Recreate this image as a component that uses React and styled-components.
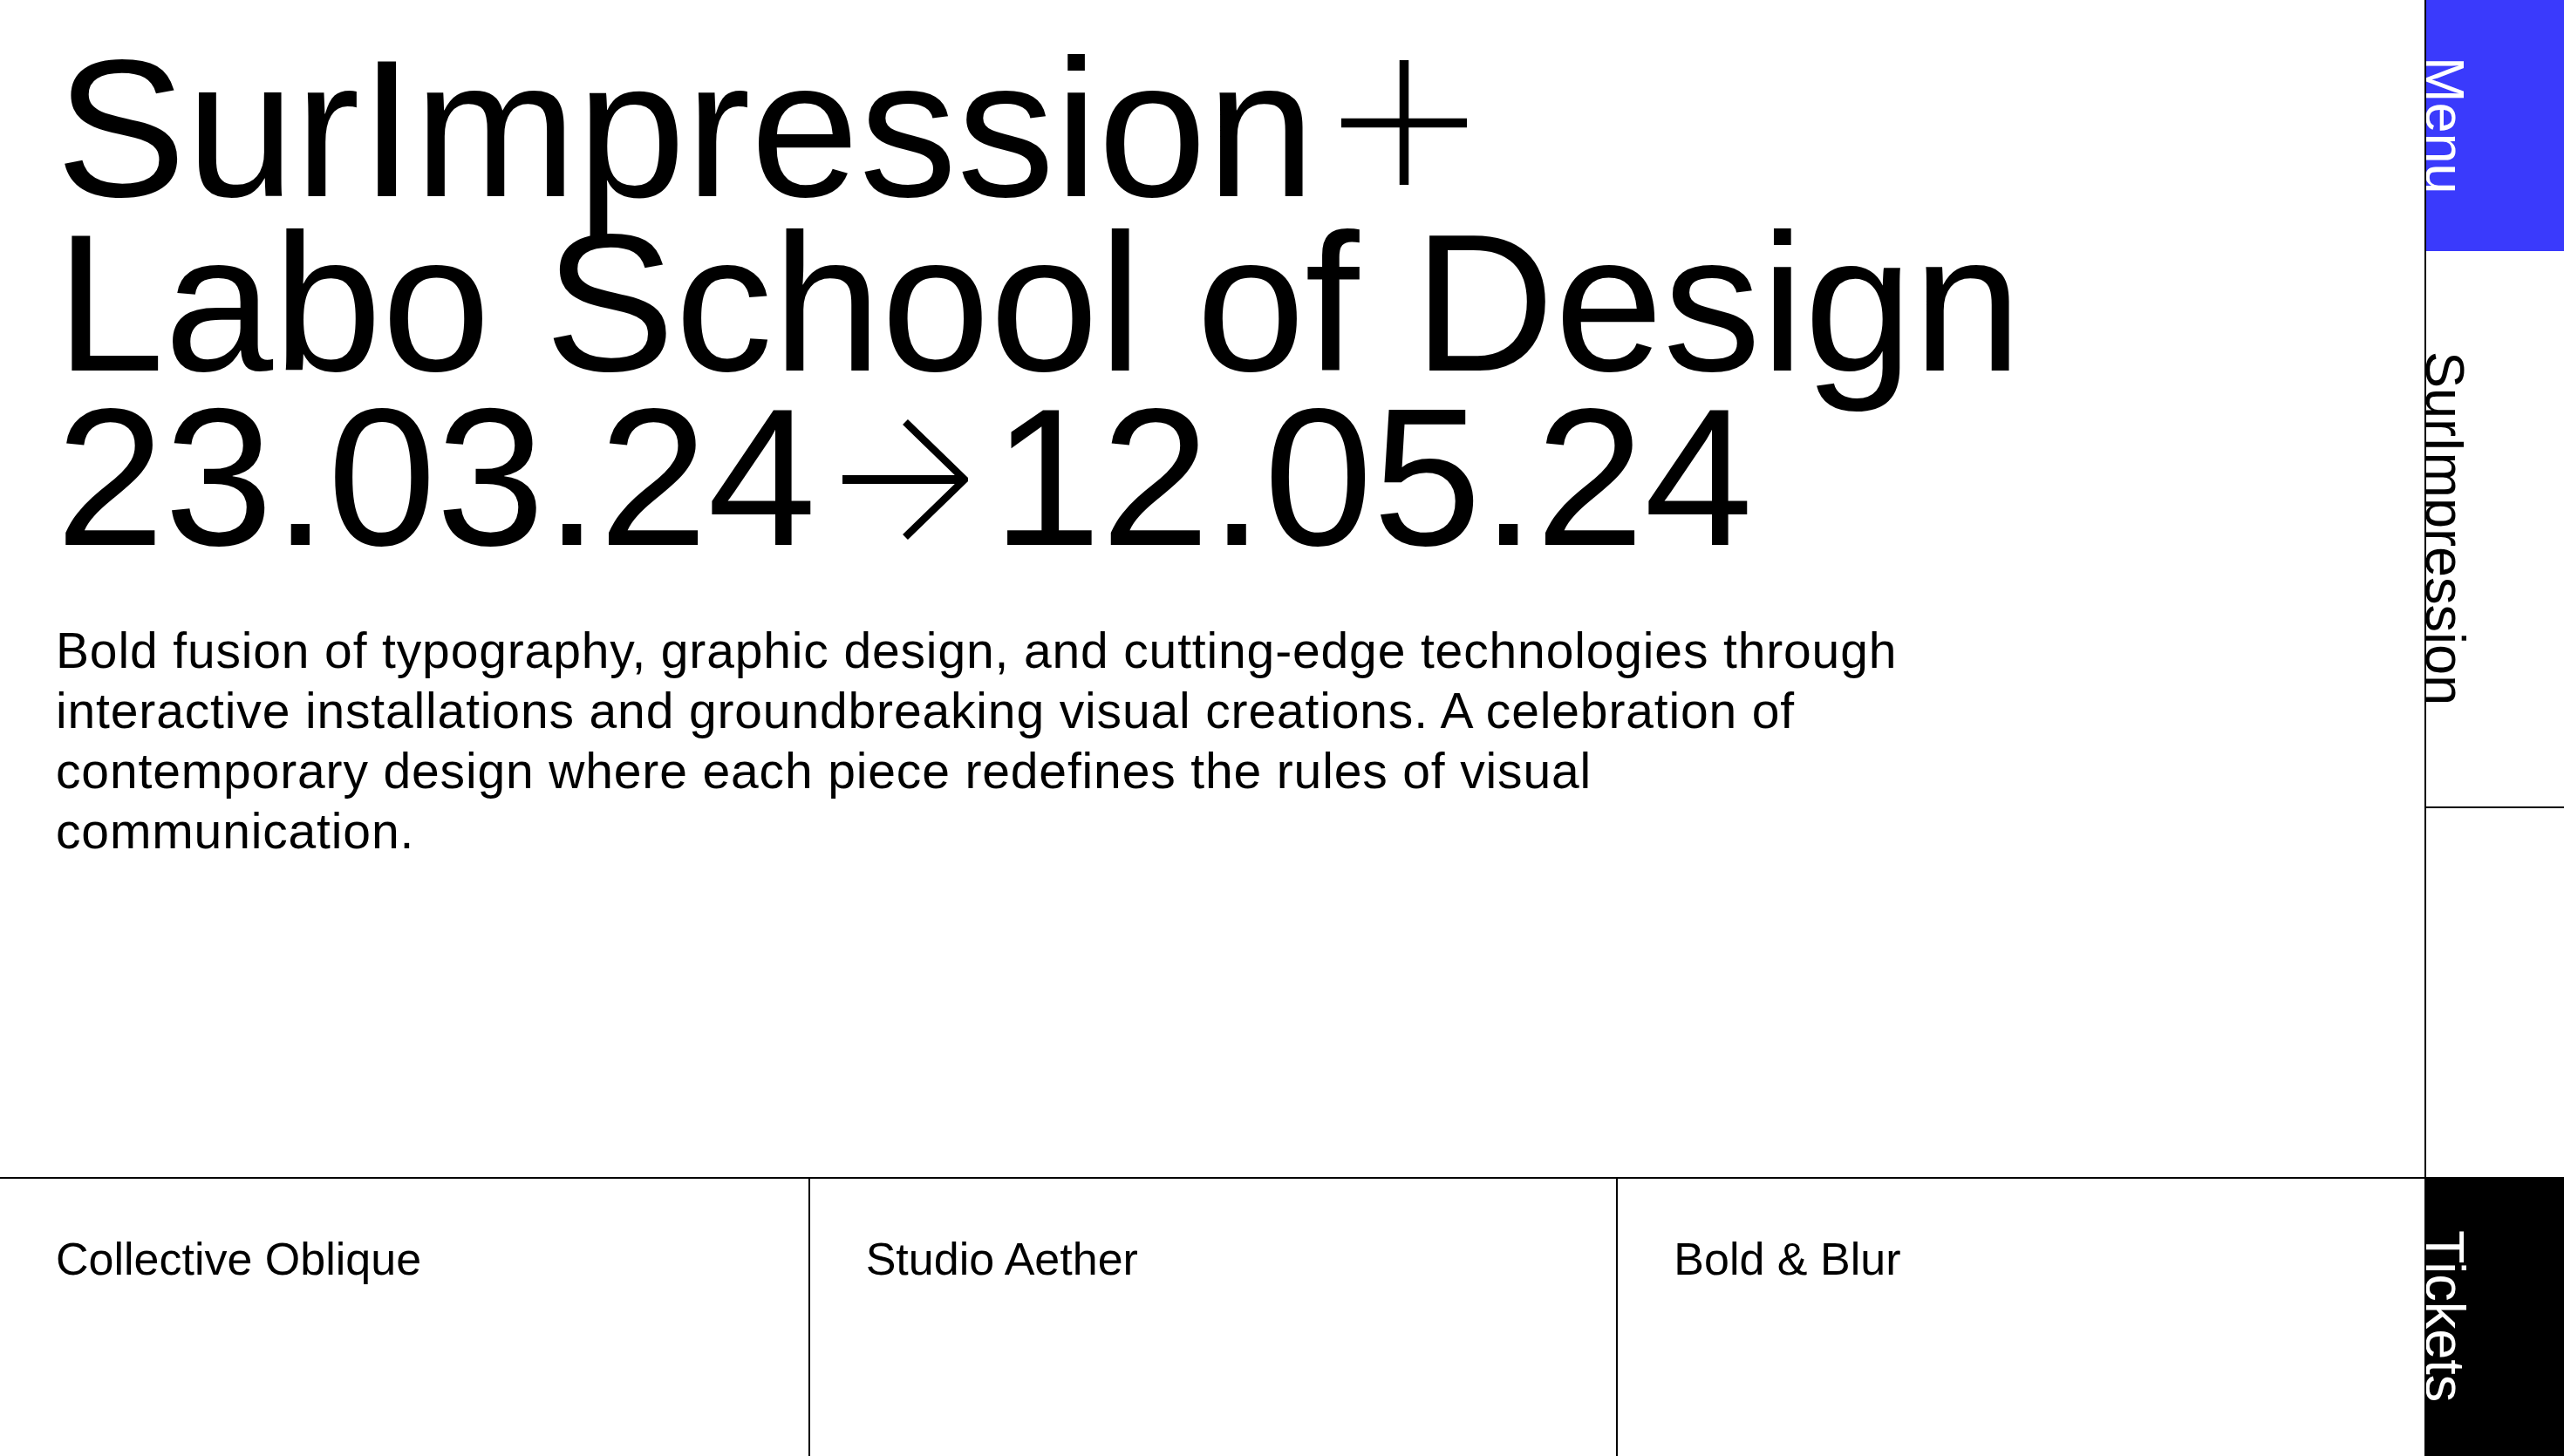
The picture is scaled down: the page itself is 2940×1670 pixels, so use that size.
import React from "react";
import styled, { createGlobalStyle } from "styled-components";

const GlobalStyle = createGlobalStyle`
  html, body, #root {
    margin: 0;
    padding: 0;
    height: 100%;
  }
  body {
    background: #fff;
    color: #000;
    font-family: "Liberation Sans", Arial, Helvetica, sans-serif;
  }
`;

const Page = styled.div`
  display: flex;
  height: 100vh;
  overflow: hidden;
`;

const Main = styled.main`
  flex: 1;
  min-width: 0;
  display: flex;
  flex-direction: column;
`;

const Hero = styled.section`
  flex: 1;
  padding: 47px 64px 0 64px;
`;

const Title = styled.h1`
  margin: 0;
  font-size: 224px;
  line-height: 200px;
  font-weight: 400;
`;

const TitleLine = styled.span`
  display: block;
  white-space: nowrap;
`;

const Glyph = styled.svg`
  display: inline-block;
  vertical-align: ${(p) => p.$lift}px;
  margin: 0 ${(p) => p.$right}px 0 ${(p) => p.$left}px;
`;

const Intro = styled.p`
  margin: 65px 0 0 0;
  width: 2160px;
  font-size: 57px;
  line-height: 69px;
  letter-spacing: 0.015em;
`;

const Partners = styled.div`
  height: 320px;
  box-sizing: border-box;
  border-top: 2px solid #000;
  display: grid;
  grid-template-columns: repeat(3, 1fr);
`;

const Partner = styled.div`
  padding: 62px 64px;
  font-size: 52px;
  line-height: 60px;
  & + & {
    border-left: 2px solid #000;
  }
`;

const Sidebar = styled.nav`
  width: 160px;
  box-sizing: border-box;
  border-left: 2px solid #000;
  display: flex;
  flex-direction: column;
`;

const SideBlock = styled.div`
  flex: ${(p) => (p.$h ? `0 0 ${p.$h}px` : "1")};
  box-sizing: border-box;
  background: ${(p) => p.$bg || "transparent"};
  color: ${(p) => p.$fg || "#000"};
  border-bottom: ${(p) => (p.$line ? "2px solid #000" : "none")};
  display: flex;
  align-items: center;
  overflow: hidden;
`;

const SideLabel = styled.span`
  writing-mode: vertical-rl;
  font-size: 63px;
  line-height: 44px;
  white-space: nowrap;
`;

const Plus = () => (
  <Glyph $lift={13} $left={30} $right={0} width="144" height="143" viewBox="0 0 144 143" aria-label="+">
    <path d="M0 72H144M72 0V143" stroke="#000" strokeWidth="10.5" fill="none" />
  </Glyph>
);

const Arrow = () => (
  <Glyph $lift={5} $left={30} $right={28} width="144" height="140" viewBox="0 0 144 140" aria-label="→">
    <path d="M0 70H138" stroke="#000" strokeWidth="10" fill="none" />
    <path d="M72 4L140 70L72 136" stroke="#000" strokeWidth="8.5" fill="none" />
  </Glyph>
);

const partners = ["Collective Oblique", "Studio Aether", "Bold & Blur"];

export default function App() {
  return (
    <Page>
      <GlobalStyle />
      <Main>
        <Hero>
          <Title>
            <TitleLine>
              SurImpression
              <Plus />
            </TitleLine>
            <TitleLine>Labo School of Design</TitleLine>
            <TitleLine>
              23.03.24
              <Arrow />
              12.05.24
            </TitleLine>
          </Title>
          <Intro>
            Bold fusion of typography, graphic design, and cutting-edge technologies through
            interactive installations and groundbreaking visual creations. A celebration of
            contemporary design where each piece redefines the rules of visual communication.
          </Intro>
        </Hero>
        <Partners>
          {partners.map((name) => (
            <Partner key={name}>{name}</Partner>
          ))}
        </Partners>
      </Main>
      <Sidebar>
        <SideBlock $h={288} $bg="#3a3afc" $fg="#fff">
          <SideLabel>Menu</SideLabel>
        </SideBlock>
        <SideBlock $h={639} $line>
          <SideLabel>SurImpression</SideLabel>
        </SideBlock>
        <SideBlock />
        <SideBlock $h={320} $bg="#000" $fg="#fff">
          <SideLabel>Tickets</SideLabel>
        </SideBlock>
      </Sidebar>
    </Page>
  );
}
